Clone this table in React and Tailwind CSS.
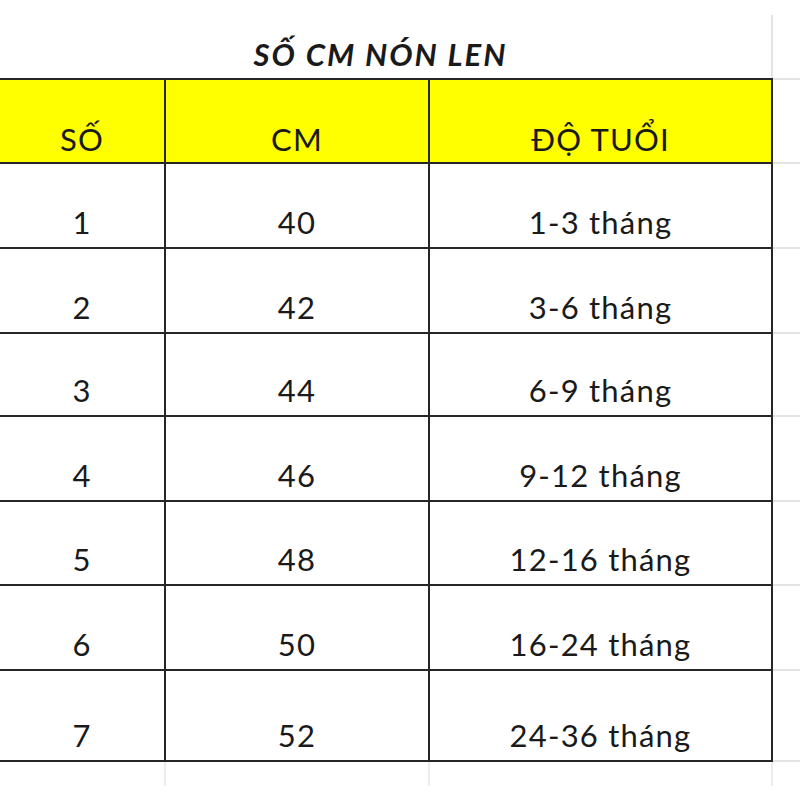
import React from "react";

const rows = [
  ["1", "40", "1-3 tháng", "h-[85px]"],
  ["2", "42", "3-6 tháng", "h-[85px]"],
  ["3", "44", "6-9 tháng", "h-[83px]"],
  ["4", "46", "9-12 tháng", "h-[85px]"],
  ["5", "48", "12-16 tháng", "h-[84px]"],
  ["6", "50", "16-24 tháng", "h-[85px]"],
  ["7", "52", "24-36 tháng", "h-[91px]"],
];

function Row({ cells, h, header }) {
  const base =
    "flex items-end justify-center border-b-2 border-r-2 border-[#262626] leading-none text-[31px] tracking-[1.2px] " +
    (header ? "bg-[#ffff00] pb-[7px]" : "bg-white pb-[9px]");
  return (
    <div className={"flex " + h}>
      <div className={base + " w-[166px]"}>{cells[0]}</div>
      <div className={base + " w-[264px]"}>{cells[1]}</div>
      <div className={base + " w-[343px]"}>{cells[2]}</div>
      <div className="flex-1 border-b-2 border-[#e3e3e3]" />
    </div>
  );
}

export default function App() {
  return (
    <div
      className="w-[800px] h-[800px] bg-white overflow-hidden text-[#1a1a1a]"
      style={{ fontFamily: "Lato, 'Open Sans', sans-serif" }}
    >
      <div className="flex h-[78px]">
        <div className="w-[771px] flex items-end justify-center pb-[8px] pr-[10px]">
          <span className="text-[31px] font-bold italic leading-none tracking-[2px]">
            SỐ CM NÓN LEN
          </span>
        </div>
        <div className="flex-1 flex flex-col">
          <div className="h-[15px]" />
          <div className="flex-1 border-l-2 border-[#e3e3e3]" />
        </div>
      </div>
      <div className="flex h-[2px]">
        <div className="w-[773px] bg-[#262626]" />
        <div className="flex-1 bg-[#e3e3e3]" />
      </div>
      <Row cells={["SỐ", "CM", "ĐỘ TUỔI"]} h="h-[84px]" header />
      {rows.map((r) => (
        <Row key={r[0]} cells={r} h={r[3]} />
      ))}
      <div className="flex h-[24px]">
        <div className="w-[166px] border-r-2 border-[#ececec]" />
        <div className="w-[264px] border-r-2 border-[#ececec]" />
        <div className="w-[343px] border-r-2 border-[#ececec]" />
      </div>
    </div>
  );
}
